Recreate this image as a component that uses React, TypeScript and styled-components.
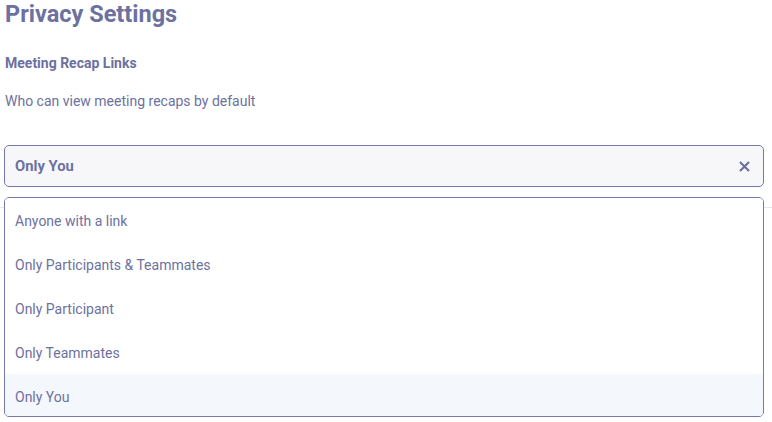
import React from "react";
import styled, { createGlobalStyle } from "styled-components";

const Global = createGlobalStyle`
  html, body { margin: 0; padding: 0; background: #ffffff; }
  body { font-family: Roboto, "Liberation Sans", Arial, sans-serif; color: #6c71a0; }
  * { box-sizing: border-box; }
`;

const Page = styled.div`
  width: 772px;
  height: 422px;
  overflow: hidden;
  position: relative;
`;

const Content = styled.div`
  padding: 0 8px 0 4px;
  display: flex;
  flex-direction: column;
`;

const Title = styled.h1`
  margin: 0;
  padding-left: 1px;
  font-size: 23.5px;
  line-height: 28px;
  font-weight: 700;
  color: #6c71a0;
`;

const Label = styled.h3`
  margin: 27px 0 0;
  padding-left: 1px;
  font-size: 14px;
  line-height: 16px;
  font-weight: 700;
  color: #6c71a0;
`;

const Description = styled.p`
  margin: 22px 0 0;
  padding-left: 1px;
  font-size: 14px;
  line-height: 16px;
  color: #6c71a0;
`;

const SelectWrap = styled.div`
  position: relative;
  margin-top: 36px;
`;

const SelectBox = styled.div`
  height: 42px;
  border: 1px solid #7379ad;
  border-radius: 5px;
  background: #f7f7fa;
  display: flex;
  align-items: center;
  justify-content: space-between;
  padding: 0 12px 0 10px;
`;

const SelectedValue = styled.span`
  font-size: 14.8px;
  font-weight: 700;
  color: #6c71a0;
`;

const ClearButton = styled.button`
  border: 0;
  background: transparent;
  padding: 0;
  width: 14px;
  height: 14px;
  display: flex;
  align-items: center;
  justify-content: center;
  cursor: pointer;
`;

const Divider = styled.div`
  height: 1px;
  background: #e6e7ee;
  margin: 20px -8px 0 -4px;
`;

const Menu = styled.ul`
  position: absolute;
  top: 52px;
  left: 0;
  right: 0;
  height: 220px;
  margin: 0;
  padding: 0;
  list-style: none;
  border: 1px solid #7379ad;
  border-radius: 5px;
  background: #ffffff;
  overflow: hidden;
`;

const Option = styled.li<{ $active?: boolean }>`
  height: 44px;
  display: flex;
  align-items: center;
  padding: 1px 10px 0;
  font-size: 14px;
  color: #6c71a0;
  background: ${(p) => (p.$active ? "#f4f7fb" : "#ffffff")};
`;

const options = [
  "Anyone with a link",
  "Only Participants & Teammates",
  "Only Participant",
  "Only Teammates",
  "Only You",
];

export default function App() {
  const selected = "Only You";
  return (
    <Page>
      <Global />
      <Content>
        <Title>Privacy Settings</Title>
        <Label>Meeting Recap Links</Label>
        <Description>Who can view meeting recaps by default</Description>
        <SelectWrap>
          <SelectBox>
            <SelectedValue>{selected}</SelectedValue>
            <ClearButton aria-label="Clear">
              <svg width="11" height="11" viewBox="0 0 11 11">
                <path d="M1 1 L10 10 M10 1 L1 10" stroke="#6c71a0" strokeWidth="2.2" strokeLinecap="butt" />
              </svg>
            </ClearButton>
          </SelectBox>
          <Divider />
          <Menu>
            {options.map((o) => (
              <Option key={o} $active={o === selected}>
                {o}
              </Option>
            ))}
          </Menu>
        </SelectWrap>
      </Content>
    </Page>
  );
}
